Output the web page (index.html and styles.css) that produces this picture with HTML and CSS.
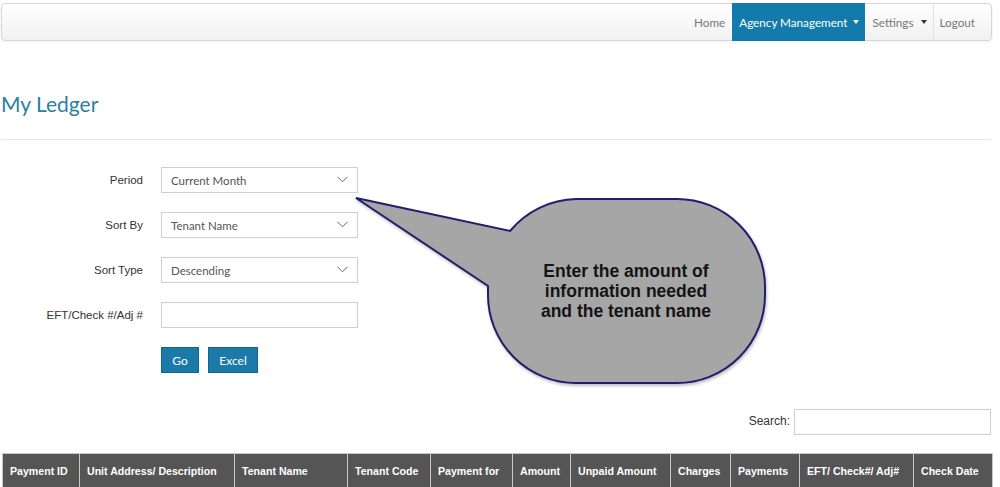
FILE: index.html
```html
<!DOCTYPE html>
<html lang="en">
<head>
<meta charset="utf-8">
<title>My Ledger</title>
<link rel="stylesheet" href="styles.css">
</head>
<body>
<div class="page">
  <header class="navbar">
    <ul class="nav">
      <li class="nav-item">Home</li>
      <li class="nav-item active">Agency Management <span class="caret"></span></li>
      <li class="nav-item settings">Settings <span class="caret dark"></span></li>
      <li class="nav-item sep">Logout</li>
    </ul>
  </header>

  <h1 class="title">My Ledger</h1>
  <hr class="rule">

  <form class="filters">
    <label class="lbl">Period</label>
    <div class="select"><span>Current Month</span><svg class="chev" width="11" height="7" viewBox="0 0 11 7"><path d="M0.5 0.8 L5.5 5.8 L10.5 0.8" fill="none" stroke="#666" stroke-width="1"/></svg></div>

    <label class="lbl">Sort By</label>
    <div class="select"><span>Tenant Name</span><svg class="chev" width="11" height="7" viewBox="0 0 11 7"><path d="M0.5 0.8 L5.5 5.8 L10.5 0.8" fill="none" stroke="#666" stroke-width="1"/></svg></div>

    <label class="lbl">Sort Type</label>
    <div class="select"><span>Descending</span><svg class="chev" width="11" height="7" viewBox="0 0 11 7"><path d="M0.5 0.8 L5.5 5.8 L10.5 0.8" fill="none" stroke="#666" stroke-width="1"/></svg></div>

    <label class="lbl">EFT/Check #/Adj #</label>
    <div class="textbox"></div>

    <div class="spacer"></div>
    <div class="buttons">
      <span class="btn btn-go">Go</span>
      <span class="btn btn-excel">Excel</span>
    </div>
  </form>

  <div class="search-row">
    <span class="search-lbl">Search:</span>
    <div class="search-box"></div>
  </div>

  <table class="ledger">
    <colgroup>
      <col style="width:77px"><col style="width:155px"><col style="width:113px"><col style="width:83px"><col style="width:82px"><col style="width:58px"><col style="width:100px"><col style="width:60px"><col style="width:69px"><col style="width:114px"><col style="width:79px">
    </colgroup>
    <thead>
      <tr>
        <th>Payment ID</th>
        <th>Unit Address/ Description</th>
        <th>Tenant Name</th>
        <th>Tenant Code</th>
        <th>Payment for</th>
        <th>Amount</th>
        <th>Unpaid Amount</th>
        <th>Charges</th>
        <th>Payments</th>
        <th>EFT/ Check#/ Adj#</th>
        <th>Check Date</th>
      </tr>
    </thead>
  </table>
</div>

<svg class="callout" width="1000" height="487" viewBox="0 0 1000 487">
  <path class="bubble" d="M 510 231 A 88 88 0 0 1 576 199 L 677 199 A 88 88 0 0 1 765 287 L 765 295 A 88 88 0 0 1 677 383 L 576 383 A 88 88 0 0 1 488 295 L 488 286 L 356 198 Z"/>
  <text class="callout-text" x="626" y="277">Enter the amount of</text>
  <text class="callout-text" x="626" y="297">information needed</text>
  <text class="callout-text" x="626" y="317">and the tenant name</text>
</svg>
</body>
</html>
```

FILE: styles.css
```css
* { box-sizing: border-box; }

html, body {
  margin: 0;
  padding: 0;
  background: #fff;
}

body {
  position: relative;
  width: 1000px;
  height: 487px;
  overflow: hidden;
  font-family: Lato, "Liberation Sans", Arial, sans-serif;
}

.page {
  padding: 3px 8px 0 1px;
}

/* Navbar */
.navbar {
  height: 38px;
  width: 991px;
  border: 1px solid #d6d6d6;
  border-radius: 4px;
  background: linear-gradient(to bottom, #ffffff 0%, #f1f1f1 100%);
  box-shadow: 0 1px 3px rgba(0,0,0,0.06);
  display: flex;
  justify-content: flex-end;
}

.nav {
  list-style: none;
  margin: -1px 0;
  padding: 0 9px 0 0;
  display: flex;
  align-items: stretch;
}

.nav-item {
  display: flex;
  align-items: center;
  padding: 0 7px;
  font-size: 11.7px;
  color: #777;
  white-space: nowrap;
}

.nav-item.active {
  background: #137bab;
  color: #fff;
  padding: 0 6px 0 7px;
}

.nav-item.settings {
  padding: 0 6px 0 8px;
}

.nav-item.sep {
  border-left: 1px solid #e2e2e2;
  padding-left: 6px;
}

.caret {
  display: inline-block;
  width: 0;
  height: 0;
  margin-left: 5px;
  border-left: 3.5px solid transparent;
  border-right: 3.5px solid transparent;
  border-top: 4px solid #fff;
  position: relative;
  top: 0;
}

.caret.dark { border-top-color: #333; margin-left: 7px; }

/* Title */
.title {
  margin: 50px 0 0 0;
  font-family: Lato, "Liberation Sans", sans-serif;
  font-weight: 400;
  font-size: 21px;
  line-height: 26px;
  color: #2c80a0;
}

.rule {
  margin: 22px 0 0 0;
  width: 990px;
  border: 0;
  border-top: 1px solid #e6e6e6;
  height: 0;
}

/* Filters form */
.filters {
  margin: 27px 0 0 0;
  display: grid;
  grid-template-columns: 142px 197px;
  grid-auto-rows: 26px;
  column-gap: 18px;
  row-gap: 19px;
}

.lbl {
  justify-self: end;
  align-self: center;
  font-family: "Liberation Sans", Arial, sans-serif;
  font-size: 11.5px;
  color: #333;
}

.select, .textbox {
  height: 26px;
  border: 1px solid #cfcfcf;
  background: #fff;
}

.select {
  display: flex;
  align-items: center;
  justify-content: space-between;
  padding: 0 9px 0 9px;
  font-family: Lato, sans-serif;
  font-size: 11.5px;
  color: #555;
}

.chev { display: block; position: relative; top: -1px; }

.buttons {
  display: flex;
  gap: 9px;
}

.btn {
  display: flex;
  align-items: center;
  justify-content: center;
  height: 26px;
  background: #1b7aa8;
  border: 1px solid #16658c;
  color: #fff;
  font-family: Lato, sans-serif;
  font-size: 12px;
}

.btn-go { width: 38px; }
.btn-excel { width: 50px; }

/* Search */
.search-row {
  margin-top: 36px;
  display: flex;
  justify-content: flex-end;
  align-items: center;
  gap: 4px;
  width: 990px;
}

.search-lbl {
  font-family: "Liberation Sans", Arial, sans-serif;
  font-size: 12px;
  color: #333;
  position: relative;
  top: -1px;
}

.search-box {
  width: 197px;
  height: 26px;
  border: 1px solid #cfcfcf;
  background: #fff;
}

/* Table */
.ledger {
  margin: 18px 0 0 1px;
  width: 990px;
  table-layout: fixed;
  border-collapse: collapse;
}

.ledger th {
  background: #555555;
  color: #fff;
  font-family: "Liberation Sans", Arial, sans-serif;
  font-weight: bold;
  font-size: 10.6px;
  text-align: left;
  padding: 0 7px;
  height: 34px;
  border: 1px solid #c8c8c8;
  white-space: nowrap;
  overflow: hidden;
}

/* Callout overlay */
.callout {
  position: absolute;
  left: 0;
  top: 0;
  pointer-events: none;
}

.bubble {
  fill: #a6a6a6;
  stroke: #1f1f6e;
  stroke-width: 2;
  stroke-linejoin: miter;
  filter: drop-shadow(1px 2px 1.5px rgba(0,0,0,0.25));
}

.callout-text {
  font-family: "Liberation Sans", Arial, sans-serif;
  font-weight: bold;
  font-size: 17.5px;
  fill: #141414;
  text-anchor: middle;
}
```
